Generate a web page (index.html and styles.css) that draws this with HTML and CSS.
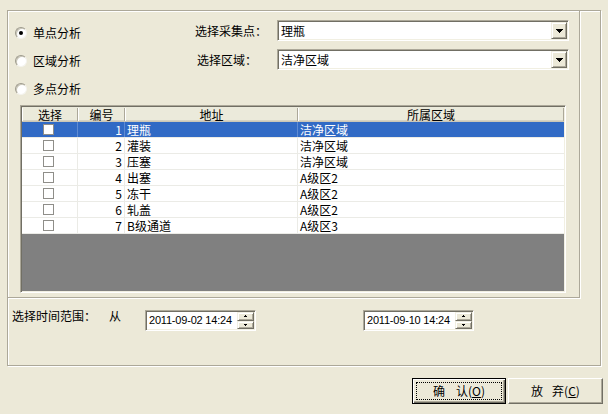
FILE: index.html
```html
<!DOCTYPE html>
<html lang="zh">
<head>
<meta charset="utf-8">
<title>分析</title>
<link rel="stylesheet" href="styles.css">
</head>
<body>
<div class="outer">
  <div class="inner">
    <div class="top">
      <div class="modes">
        <div class="radio-row"><span class="radio checked"></span><span class="rtext">单点分析</span></div>
        <div class="radio-row"><span class="radio"></span><span class="rtext">区域分析</span></div>
        <div class="radio-row"><span class="radio"></span><span class="rtext">多点分析</span></div>
      </div>
      <div class="form">
        <div class="form-row">
          <span class="flabel">选择采集点：</span>
          <div class="combo"><span class="combo-text">理瓶</span><span class="drop"><svg width="7" height="4" viewBox="0 0 7 4" shape-rendering="crispEdges"><path d="M0 0h7v1h-1v1h-1v1h-1v1h-1v-1h-1v-1h-1v-1h-1z" fill="#000"/></svg></span></div>
        </div>
        <div class="form-row">
          <span class="flabel l2">选择区域：</span>
          <div class="combo"><span class="combo-text">洁净区域</span><span class="drop"><svg width="7" height="4" viewBox="0 0 7 4" shape-rendering="crispEdges"><path d="M0 0h7v1h-1v1h-1v1h-1v1h-1v-1h-1v-1h-1v-1h-1z" fill="#000"/></svg></span></div>
        </div>
      </div>
    </div>
    <div class="list">
      <div class="lhead">
        <span class="hc">选择</span><span class="hc">编号</span><span class="hc">地址</span><span class="hc">所属区域</span>
      </div>
      <div class="lrow sel"><span class="c c1"><span class="chk"></span></span><span class="c c2">1</span><span class="c c3">理瓶</span><span class="c c4">洁净区域</span></div>
      <div class="lrow"><span class="c c1"><span class="chk"></span></span><span class="c c2">2</span><span class="c c3">灌装</span><span class="c c4">洁净区域</span></div>
      <div class="lrow"><span class="c c1"><span class="chk"></span></span><span class="c c2">3</span><span class="c c3">压塞</span><span class="c c4">洁净区域</span></div>
      <div class="lrow"><span class="c c1"><span class="chk"></span></span><span class="c c2">4</span><span class="c c3">出塞</span><span class="c c4">A级区2</span></div>
      <div class="lrow"><span class="c c1"><span class="chk"></span></span><span class="c c2">5</span><span class="c c3">冻干</span><span class="c c4">A级区2</span></div>
      <div class="lrow"><span class="c c1"><span class="chk"></span></span><span class="c c2">6</span><span class="c c3">轧盖</span><span class="c c4">A级区2</span></div>
      <div class="lrow"><span class="c c1"><span class="chk"></span></span><span class="c c2">7</span><span class="c c3">B级通道</span><span class="c c4">A级区3</span></div>
    </div>
  </div>
  <div class="timebar">
    <span class="tlabel">选择时间范围：</span>
    <span class="from">从</span>
    <div class="dt">
      <span class="dt-text">2011-09-02 14:24</span>
      <span class="spin"><span class="sb"><svg width="3" height="2" viewBox="0 0 3 2" shape-rendering="crispEdges"><path d="M1 0h1v1h1v1h-3v-1h1z" fill="#000"/></svg></span><span class="sb"><svg width="3" height="2" viewBox="0 0 3 2" shape-rendering="crispEdges"><path d="M0 0h3v1h-1v1h-1v-1h-1z" fill="#000"/></svg></span></span>
    </div>
    <div class="dt dt2">
      <span class="dt-text">2011-09-10 14:24</span>
      <span class="spin"><span class="sb"><svg width="3" height="2" viewBox="0 0 3 2" shape-rendering="crispEdges"><path d="M1 0h1v1h1v1h-3v-1h1z" fill="#000"/></svg></span><span class="sb"><svg width="3" height="2" viewBox="0 0 3 2" shape-rendering="crispEdges"><path d="M0 0h3v1h-1v1h-1v-1h-1z" fill="#000"/></svg></span></span>
    </div>
  </div>
</div>
<div class="buttons">
  <div class="btn default"><span class="focus">确<span class="sp"></span>认(<u>O</u>)</span></div>
  <div class="btn"><span class="focus nofocus">放<span class="sp2"></span>弃(<u>C</u>)</span></div>
</div>
</body>
</html>
```
FILE: styles.css
```css
* { box-sizing: border-box; }
html, body { margin: 0; padding: 0; }
body {
  width: 608px;
  height: 414px;
  overflow: hidden;
  background: #ECE9D8;
  font-family: "Noto Sans CJK SC", "Noto Sans", sans-serif;
  font-size: 12px;
  color: #000;
  padding-top: 10px;
  padding-left: 7px;
}

.outer {
  width: 594px;
  height: 356px;
  border: 1px solid #ACA899;
  box-shadow: inset 1px 1px 0 #fff, 1px 1px 0 #fff;
}
.inner {
  width: 573px;
  height: 288px;
  margin: -1px 0 0 -1px;
  border: 1px solid #ACA899;
  box-shadow: inset 1px 1px 0 #fff, 1px 1px 0 #fff;
}

.top { display: flex; }
.modes {
  width: 187px;
  padding-top: 8px;
  padding-left: 7px;
}
.radio-row {
  height: 28px;
  display: flex;
  align-items: center;
  line-height: 16px;
}
.radio {
  width: 12px;
  height: 12px;
  border-radius: 50%;
  background: #fff;
  border: 1px solid;
  border-color: #9D9A8C #F4F3EE #F4F3EE #9D9A8C;
  box-shadow: inset 1px 1px 0 #C9C6B8;
  display: flex;
  align-items: center;
  justify-content: center;
  margin-right: 6px;
}
.radio.checked::after {
  content: "";
  width: 4px;
  height: 4px;
  border-radius: 50%;
  background: #000;
}

.form { padding-top: 9px; }
.form-row {
  display: flex;
  align-items: center;
  height: 21px;
  margin-bottom: 8px;
  line-height: 16px;
}
.flabel { width: 82px; }
.flabel.l2 { padding-left: 2px; }
.combo {
  width: 292px;
  height: 21px;
  display: flex;
  background: #fff;
  border: 1px solid;
  border-color: #ACA899 #fff #fff #ACA899;
  box-shadow: inset 1px 1px 0 #716F64, inset -1px -1px 0 #F1EFE2;
  padding: 1px;
}
.combo-text {
  flex: 1;
  padding-left: 2px;
  line-height: 17px;
}
.drop {
  width: 16px;
  height: 17px;
  background: #ECE9D8;
  border: 1px solid;
  border-color: #F1EFE2 #716F64 #716F64 #F1EFE2;
  box-shadow: inset 1px 1px 0 #fff, inset -1px -1px 0 #ACA899;
  display: flex;
  align-items: center;
  justify-content: center;
}
.drop svg { display: block; }

.list {
  margin: 2px 0 0 12px;
  width: 546px;
  height: 188px;
  background: #808080;
  border: 1px solid;
  border-color: #ACA899 #fff #fff #ACA899;
  box-shadow: inset 1px 1px 0 #716F64, inset -1px -1px 0 #F1EFE2;
  padding: 1px;
}
.lhead, .lrow {
  display: grid;
  grid-template-columns: 56px 47px 173px 266px;
}
.lhead {
  height: 15px;
  background: #EBEADB;
  box-shadow: inset 0 -1px 0 #CBC7B8, inset 0 -2px 0 #D6D2C2;
}
.hc {
  text-align: center;
  line-height: 14px;
  box-shadow: inset -1px 0 0 #ACA899, inset 1px 0 0 #fff;
  height: 13px;
  margin-top: 1px;
}
.lrow {
  height: 16px;
  background: #fff;
  border-bottom: 1px solid #EBEBE6;
}
.c {
  line-height: 15px;
  border-right: 1px solid #EBEBE6;
  white-space: nowrap;
  overflow: hidden;
}
.c1 {
  display: flex;
  align-items: center;
  justify-content: center;
  padding-right: 2px;
}
.c2 { text-align: right; padding-right: 2px; }
.c3, .c4 { padding-left: 2px; }
.c4 { border-right: 0; }
.chk {
  width: 11px;
  height: 11px;
  background: #fff;
  border: 1px solid #8F8E89;
}
.lrow.sel { background: #316AC5; color: #fff; }
.lrow.sel .c { border-right-color: #5F8BD2; }
.lrow.sel .c4 { border-right: 0; }

.timebar {
  display: flex;
  align-items: flex-start;
  padding-left: 4px;
}
.tlabel {
  width: 97px;
  margin-top: 10px;
  line-height: 16px;
}
.from {
  margin-top: 10px;
  line-height: 16px;
}
.dt {
  margin-top: 12px;
  margin-left: 24px;
  width: 111px;
  height: 21px;
  display: flex;
  background: #fff;
  border: 1px solid;
  border-color: #ACA899 #fff #fff #ACA899;
  box-shadow: inset 1px 1px 0 #716F64, inset -1px -1px 0 #F1EFE2;
  padding: 1px;
}
.dt2 { margin-left: 107px; }
.dt-text {
  flex: 1;
  padding-left: 2px;
  font-family: "Liberation Sans", Arial, sans-serif;
  font-size: 11px;
  letter-spacing: -0.2px;
  line-height: 17px;
}
.spin {
  width: 17px;
  display: flex;
  flex-direction: column;
}
.sb {
  flex: 1;
  background: #ECE9D8;
  border: 1px solid;
  border-color: #F1EFE2 #716F64 #716F64 #F1EFE2;
  box-shadow: inset 1px 1px 0 #fff, inset -1px -1px 0 #ACA899;
  display: flex;
  align-items: center;
  justify-content: center;
}
.sb svg { display: block; }

.buttons {
  display: flex;
  justify-content: flex-end;
  gap: 2px;
  margin-top: 12px;
  padding-right: 5px;
  margin-left: -7px;
}
.btn {
  width: 95px;
  height: 26px;
  background: #ECE9D8;
  border: 1px solid;
  border-color: #fff #716F64 #716F64 #fff;
  box-shadow: inset -1px -1px 0 #ACA899;
  display: flex;
  align-items: center;
  justify-content: center;
  padding: 3px;
}
.btn.default {
  width: 94px;
  border: 1px solid #000;
  box-shadow: inset 1px 1px 0 #fff, inset -1px -1px 0 #716F64, inset -2px -2px 0 #ACA899;
}
.focus {
  flex: 1;
  align-self: stretch;
  display: flex;
  align-items: center;
  justify-content: center;
  border: 1px dotted #000;
  line-height: 16px;
}
.focus.nofocus { border-color: transparent; }
.sp { display: inline-block; width: 11px; }
.sp2 { display: inline-block; width: 9px; }
u { text-decoration: underline; text-underline-offset: 1px; }
```
